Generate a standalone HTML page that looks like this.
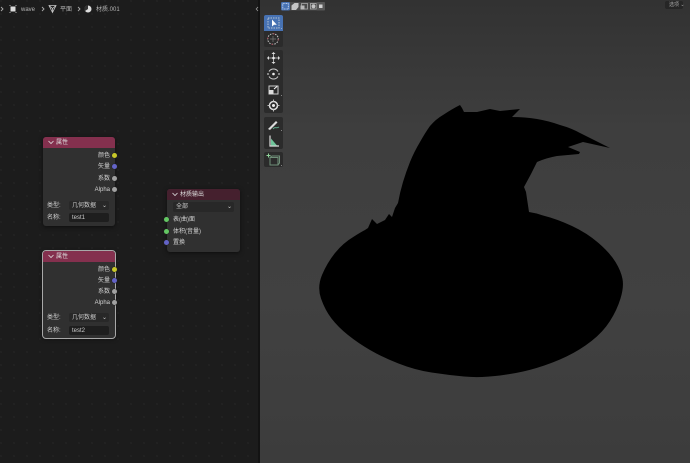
<!DOCTYPE html>
<html><head><meta charset="utf-8"><style>
html,body{margin:0;padding:0;width:690px;height:463px;overflow:hidden;background:#1d1d1d}
body{font-family:"Liberation Sans","Noto Sans CJK SC",sans-serif;font-size:6px;color:#c8c8c8}
#w{position:absolute;left:0;top:0;width:690px;height:463px;overflow:hidden;filter:blur(.3px)}
.a{position:absolute;white-space:nowrap;line-height:8px}
#ne{position:absolute;left:0;top:0;width:258px;height:463px;background-color:#1c1c1c;background-image:radial-gradient(circle at 1px 1px,#272727 .6px,transparent 1px);background-size:13px 13px}
#vp{position:absolute;left:260px;top:0;width:430px;height:463px;background:linear-gradient(#323232 0,#383838 60px,#3e3e3e 130px,#414141 300px,#3c3c3c 463px)}
.node{position:absolute;background:#303030;border-radius:3px;box-shadow:0 1px 5px rgba(0,0,0,.55);width:72px}
.hd{position:absolute;left:0;top:0;right:0;height:11px;border-radius:3px 3px 0 0;background:#84304e;color:#ddd}
.s{position:absolute;width:5px;height:5px;border-radius:50%;background:#a1a1a1;box-shadow:0 0 0 .5px #222}
.r{position:absolute;right:5px;text-align:right;line-height:8px;color:#d0d0d0}
.l{position:absolute;line-height:8px;color:#d0d0d0}
.f{position:absolute;background:#1e1e1e;border-radius:2px;height:9px;line-height:10px;color:#ccc;padding-left:3px;box-sizing:border-box}
.b{position:absolute;left:264px;width:19px;height:16px;background:#2b2b2b}
.b svg{position:absolute;left:0;top:0}
</style></head><body><div id="w">
<div id="ne"></div>
<div style="position:absolute;left:258px;top:0;width:2px;height:463px;background:#131313"></div>
<div id="vp"></div>

<svg class="a" style="left:0;top:0" width="140" height="16" viewBox="0 0 140 16">
<path d="M1 7l2 2-2 2M42 7l2 2-2 2M78 7l2 2-2 2" fill="none" stroke="#aaa" stroke-width=".9"/>
<rect x="10.500" y="6.500" width="5" height="5" fill="#ddd"/><path d="M9.500 5.500h1M15.500 5.500h1M9.500 12.500h1M15.500 12.500h1" stroke="#aaa"/>
<path d="M49 5.500h7l-3.500 7zM49 5.500l3.500 3 3.500-3M52.500 8.500v4" fill="none" stroke="#c8c8c8" stroke-width=".8"/>
<circle cx="88" cy="9" r="3.500" fill="#ddd"/><path d="M88 5.500a3.500 3.500 0 0 0-3 5.500l3-2z" fill="#333"/>
</svg>
<div class="a" style="left:21px;top:6px;color:#b4b4b4">wave</div>
<div class="a" style="left:60px;top:6px;color:#b4b4b4">平面</div>
<div class="a" style="left:96px;top:6px;color:#b4b4b4">材质.001</div>

<div class="node" style="left:43px;top:137px;height:89px">
<div class="hd"><div class="a" style="left:13px;top:2px">属性</div>
<svg class="a" style="left:5px;top:3px" width="6" height="5"><path d="M.5 1l2.500 2.500L5.500 1" fill="none" stroke="#ddd" stroke-width=".8"/></svg></div>
<div class="r" style="top:15px">颜色</div><div class="s" style="left:69px;top:15.500px;background:#c7c729"></div>
<div class="r" style="top:26px">矢量</div><div class="s" style="left:69px;top:27px;background:#6363c7"></div>
<div class="r" style="top:38px">系数</div><div class="s" style="left:69px;top:38.500px"></div>
<div class="r" style="top:49px">Alpha</div><div class="s" style="left:69px;top:50px"></div>
<div class="l" style="left:4px;top:65px">类型:</div>
<div class="f" style="left:26px;top:64px;width:40px;background:#282828">几何数据<span style="position:absolute;right:2px;top:0">⌄</span></div>
<div class="l" style="left:4px;top:77px">名称:</div>
<div class="f" style="left:26px;top:76px;width:40px">test1</div>
</div>

<div class="node" style="left:43px;top:251px;height:87px;outline:1px solid #a8a8a8;border-radius:3px">
<div class="hd"><div class="a" style="left:13px;top:2px">属性</div>
<svg class="a" style="left:5px;top:3px" width="6" height="5"><path d="M.5 1l2.500 2.500L5.500 1" fill="none" stroke="#ddd" stroke-width=".8"/></svg></div>
<div class="r" style="top:15px">颜色</div><div class="s" style="left:69px;top:15.500px;background:#c7c729"></div>
<div class="r" style="top:26px">矢量</div><div class="s" style="left:69px;top:26.500px;background:#6363c7"></div>
<div class="r" style="top:37px">系数</div><div class="s" style="left:69px;top:37.500px"></div>
<div class="r" style="top:48px">Alpha</div><div class="s" style="left:69px;top:48.500px"></div>
<div class="l" style="left:4px;top:63px">类型:</div>
<div class="f" style="left:26px;top:62px;width:40px;background:#282828">几何数据<span style="position:absolute;right:2px;top:0">⌄</span></div>
<div class="l" style="left:4px;top:76px">名称:</div>
<div class="f" style="left:26px;top:75px;width:40px">test2</div>
</div>

<div class="node" style="left:167px;top:189px;height:63px;width:73px">
<div class="hd" style="background:#45202e"><div class="a" style="left:13px;top:2px">材质输出</div>
<svg class="a" style="left:5px;top:3px" width="6" height="5"><path d="M.5 1l2.500 2.500L5.500 1" fill="none" stroke="#ddd" stroke-width=".8"/></svg></div>
<div class="f" style="left:6px;top:13px;width:61px;background:#282828;padding-left:3px;height:10px">全部<span style="position:absolute;right:2px;top:0">⌄</span></div>
<div class="l" style="left:6px;top:27px">表(曲)面</div><div class="s" style="left:-3px;top:27.500px;background:#63c763"></div>
<div class="l" style="left:6px;top:39px">体积(音量)</div><div class="s" style="left:-3px;top:39.500px;background:#63c763"></div>
<div class="l" style="left:6px;top:50px">置换</div><div class="s" style="left:-3px;top:51px;background:#6363c7"></div>
</div>

<svg class="a" style="left:0;top:0" width="690" height="463" viewBox="0 0 690 463">
<path d="M258 7l-1.800 2 1.800 2" fill="none" stroke="#999" stroke-width=".8"/>
<path fill="#000" d="M398 203Q400 192 403 182Q406 172 410 162Q414 152 420 142Q425 133 430 126Q436 119 443 115Q452 109 460 105L462 108L464 112L477 112L490 109L500 111L520 109L512 117Q525 117 537 119Q549 121 560 125Q571 128 580 133L610 148L583 142L568 147L580 152L579 154L557 156Q546 158 537 162L531 174L524 187L526 192L529 212Q536 213 543 215.500Q557 219 572 226Q587 233 598.500 243Q610 253 615.500 262Q621 271 622.500 279Q624 287 620.500 298.500Q617 310 610 321Q603 332 591.500 341Q580 350 566.500 356.500Q553 363 536.500 368Q520 373 500 375.500Q480 378 464 376.500Q448 375 431.500 372.500Q415 370 398.500 363.500Q382 357 370 350Q358 343 348 335Q338 327 331.500 318.500Q325 310 321 298.500Q317 287 322 275Q327 263 335 253Q343 243 354 236.500Q361 232 365 230L368 228L372 219L377 224L385 220L389 214L392 217L395 208Z"/>
</svg>

<!-- header mode buttons -->
<svg class="a" style="left:281px;top:2px" width="44" height="9" viewBox="0 0 44 9">
<rect x="0" y="0" width="44" height="8.500" rx="1.500" fill="#4a4a4a"/>
<rect x="0" y="0" width="9" height="8.500" rx="1.500" fill="#4772b3"/>
<rect x="1.800" y="1.500" width="5.500" height="5.500" fill="none" stroke="#d8e4f6" stroke-width=".8" stroke-dasharray="1 .6"/>
<path d="M10.500 3.500l3-2.500h4v4l-2.500 3h-4.500z" fill="#c4c4c4"/>
<rect x="20.500" y="1.500" width="6" height="5.500" fill="none" stroke="#a8a8a8" stroke-width=".8"/><rect x="19.500" y="3.500" width="4" height="4" fill="#b8b8b8"/>
<rect x="29.500" y="1.500" width="6" height="5.500" fill="none" stroke="#b4b4b4" stroke-width=".8"/><circle cx="32.500" cy="4.200" r="2" fill="#c4c4c4"/>
<rect x="35.500" y="0" width="8.500" height="8.500" rx="1" fill="#565656"/><rect x="38" y="2.500" width="3.500" height="3.500" fill="#d0d0d0"/>
</svg>

<!-- options -->
<div class="a" style="left:665px;top:1px;width:18px;height:8px;background:#262626;border-radius:2px;font-size:5px;line-height:8px;color:#aaa;padding-left:4px;box-sizing:border-box">选项 ⌄</div>

<!-- toolbar -->
<div class="b" style="top:15px;background:#4772b3;border-radius:2px 2px 0 0"><svg width="19" height="16"><rect x="4" y="3" width="11" height="10" fill="none" stroke="#b5c2d0" stroke-dasharray="1.500 1"/><path d="M8 4.500v7l2-1.800 2.800 0z" fill="#fff"/><path d="M17 14h1v-1z" fill="#ddd"/></svg></div>
<div class="b" style="top:31px;border-radius:0 0 2px 2px"><svg width="19" height="16"><circle cx="9" cy="8" r="5.300" fill="none" stroke="#c9c9c9" stroke-dasharray="1.500 1.200"/><circle cx="9" cy="8" r="5.300" fill="none" stroke="#b04050" stroke-width=".8" stroke-dasharray="1.500 6.800"/><path d="M9 5v6M6 8h6" stroke="#777" stroke-width=".7"/></svg></div>
<div class="b" style="top:50px;border-radius:2px 2px 0 0"><svg width="19" height="16"><path d="M9.500 3v10M4 8h11" stroke="#ccc" stroke-width=".8"/><path d="M9.500 2l2 2h-4zM9.500 14l2-2h-4zM3 8l2-2v4zM16 8l-2-2v4z" fill="#ddd"/><circle cx="9.500" cy="8" r="1.300" fill="#eee"/></svg></div>
<div class="b" style="top:66px"><svg width="19" height="16"><path d="M5 5.500A5.300 5.300 0 0 1 14 5.500M14 10.500A5.300 5.300 0 0 1 5 10.500" fill="none" stroke="#ccc"/><circle cx="9.500" cy="8" r="1.300" fill="#eee"/><path d="M3 8h2M14 8h2" stroke="#ddd"/></svg></div>
<div class="b" style="top:82px"><svg width="19" height="16"><rect x="5" y="4" width="9" height="8" fill="none" stroke="#ccc"/><rect x="5" y="8" width="4.500" height="4" fill="#ddd"/><path d="M10 7l3-2.500" stroke="#fff"/><path d="M17 14h1v-1z" fill="#ddd"/></svg></div>
<div class="b" style="top:98px;height:15px;border-radius:0 0 2px 2px"><svg width="19" height="15"><circle cx="9.500" cy="7.500" r="4" fill="none" stroke="#ddd" stroke-width="1.500"/><circle cx="9.500" cy="7.500" r="1.500" fill="#eee"/><path d="M9.500 1.500v2M9.500 11.500v2M3.500 7.500h2M13.500 7.500h2" stroke="#bbb"/></svg></div>
<div class="b" style="top:117px;border-radius:2px 2px 0 0"><svg width="19" height="16"><path d="M4 12L12 4l1.500 1.500L6 13z" fill="#ddd"/><path d="M9 12c2-3 3 0 6-2" fill="none" stroke="#5fa98a"/><path d="M17 14h1v-1z" fill="#ddd"/></svg></div>
<div class="b" style="top:133px;border-radius:0 0 2px 2px"><svg width="19" height="16"><path d="M6 2.500v10.500h9" fill="none" stroke="#ddd" stroke-width="1.200"/><path d="M7 5.500l6 7H7z" fill="#6fc49a"/></svg></div>
<div class="b" style="top:152px;height:15px;border-radius:2px"><svg width="19" height="15"><path d="M6 5.500h8v7.500H6z M6 5.500l2-1.500h7.500v7l-1.500 2" fill="none" stroke="#6f8f78"/><path d="M2.500 3.500h4M4.500 1.500v4" stroke="#8fd29a"/><path d="M17 14h1v-1z" fill="#ddd"/></svg></div>
</div></body></html>
